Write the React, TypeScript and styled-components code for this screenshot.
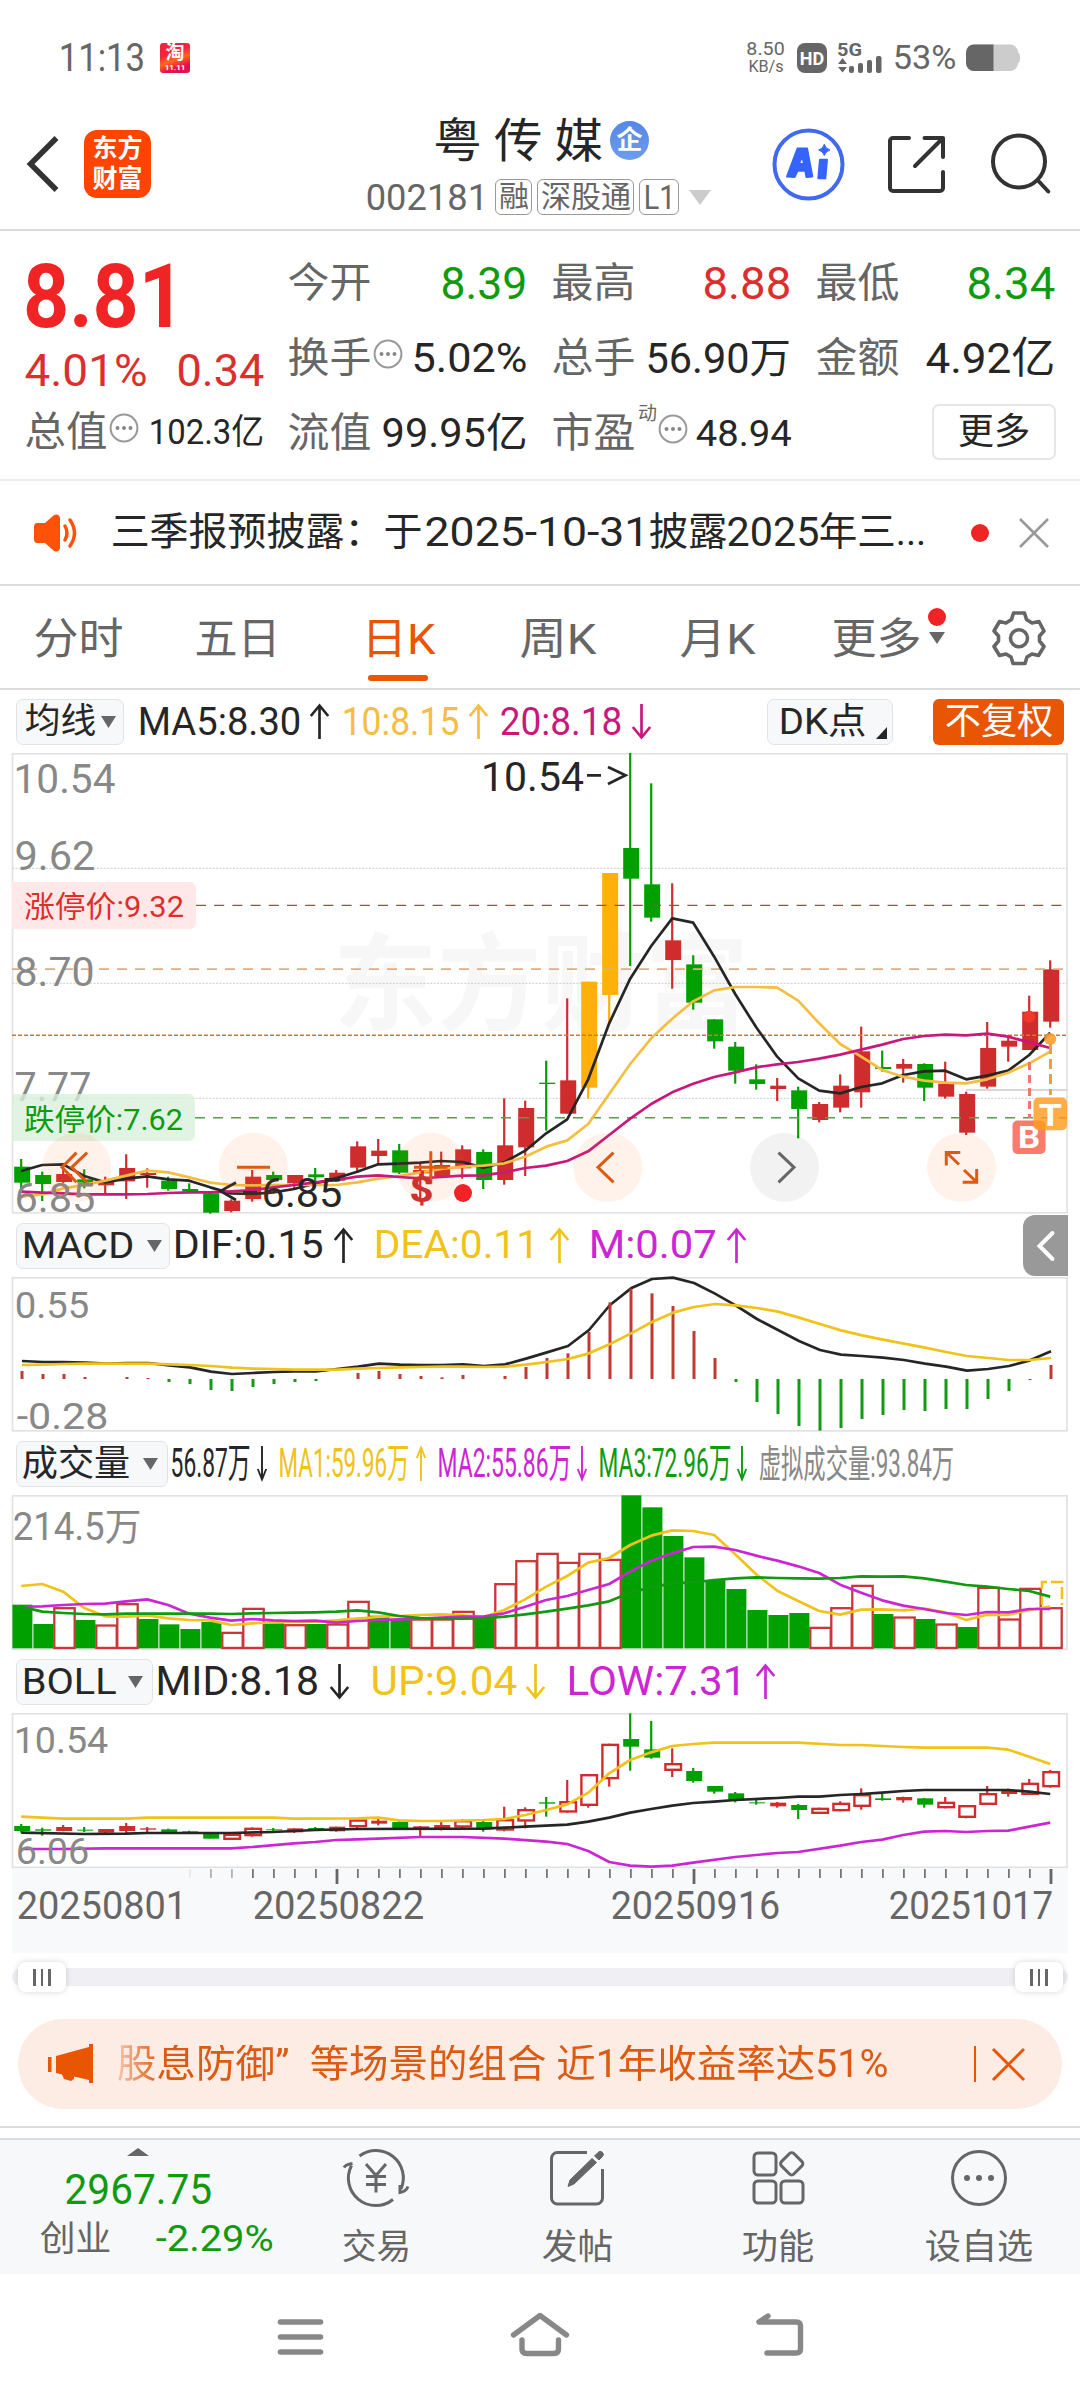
import React, { useLayoutEffect, useRef, useState } from "react";
import styled, { createGlobalStyle } from "styled-components";

const FONT = 'Roboto, "Noto Sans CJK SC", sans-serif';
const C = {
  red: "#cf2d2d",
  rise: "#dd2e2e",
  green: "#00a000",
  fall: "#109a10",
  orange: "#ffb00a",
  brand: "#e85503",
  ink: "#262626",
  grey: "#666",
  light: "#888",
  yellow: "#f0c21a",
  amber: "#f5bd42",
  magenta: "#c8187c",
  violet: "#cc26d4",
  line: "#dcdcdc",
};

const Global = createGlobalStyle`
  html, body { margin: 0; padding: 0; background: #fff; }
  * { box-sizing: border-box; }
  svg { display: block; flex: none; overflow: visible; }
`;

/* ---------- text that shrinks or stretches to its slot ---------- */

const Slot = styled.span<{ $w: number; $size: number; $ml?: number; $c?: string; $b?: number }>`
  display: block;
  flex: none;
  width: ${(p) => p.$w}px;
  height: ${(p) => p.$size}px;
  margin-left: ${(p) => p.$ml ?? 0}px;
  font: ${(p) => p.$b ?? 400} ${(p) => p.$size}px/1 ${FONT};
  color: ${(p) => p.$c ?? C.ink};
  white-space: pre;
`;
const Glyphs = styled.span`
  display: inline-block;
  transform-origin: 0 50%;
`;

type FitProps = { w: number; size: number; ml?: number; c?: string; b?: number; children: string };
function Fit({ w, size, ml, c, b, children }: FitProps) {
  const ref = useRef<HTMLSpanElement>(null);
  const [k, setK] = useState(1);
  const bearing = size * 0.035;
  useLayoutEffect(() => {
    const natural = ref.current?.offsetWidth ?? 0;
    if (natural) setK((w + bearing * 2) / natural);
  }, [w, bearing, children]);
  return (
    <Slot $w={w} $size={size} $ml={ml} $c={c} $b={b}>
      <Glyphs ref={ref} style={{ transform: `translateX(${-bearing}px) scaleX(${k})` }}>
        {children}
      </Glyphs>
    </Slot>
  );
}

/* ---------- page frame ---------- */

const Page = styled.main`
  width: 1080px;
  height: 2400px;
  overflow: hidden;
  display: flex;
  flex-direction: column;
  background: #fff;
  font-family: ${FONT};
`;

const StatusBar = styled.div`
  display: flex;
  align-items: center;
  justify-content: space-between;
  height: 98px;
  padding: 17px 60px 0 60px;
`;
const Cluster = styled.div<{ $gap?: number; $ml?: number }>`
  display: flex;
  align-items: center;
  gap: ${(p) => p.$gap ?? 0}px;
  margin-left: ${(p) => p.$ml ?? 0}px;
`;
const Speed = styled.div`
  display: flex;
  flex-direction: column;
  align-items: center;
  gap: 0;
`;
const PromoIcon = styled.div`
  width: 30px;
  height: 30px;
  border-radius: 3px;
  background: linear-gradient(160deg, #f5223c 0 35%, #ff6a1a 55%, #e3124e 76%);
  color: #fff;
  text-align: center;
  font: 700 19px/20px ${FONT};
`;
const PromoDate = styled.div`
  font: 700 8px/9px ${FONT};
`;
const HdBadge = styled.div`
  width: 30px;
  height: 30px;
  border-radius: 8px;
  background: #666;
  color: #fff;
  font: 700 18px/31px ${FONT};
  text-align: center;
`;

const Header = styled.header`
  display: flex;
  align-items: center;
  height: 133px;
  padding-left: 26px;
  border-bottom: 2px solid ${C.line};
`;
const Logo = styled.div`
  width: 67px;
  height: 68px;
  margin-left: 25px;
  padding-top: 4px;
  border-radius: 13px;
  background: #ff4400;
  color: #fff;
  font: 700 25px/30px ${FONT};
  text-align: center;
`;
const TitleColumn = styled.div`
  display: flex;
  flex-direction: column;
  gap: 17px;
  width: 346px;
  margin-left: 216px;
  padding-top: 4px;
`;
const TitleRow = styled.div`
  display: flex;
  align-items: center;
  height: 46px;
  padding: 2px 0 0 69px;
`;
const CorpBadge = styled.div`
  width: 39px;
  height: 39px;
  margin-left: 9px;
  border-radius: 50%;
  background: linear-gradient(#5587e4, #6d9df0);
  color: #fff;
  font: 700 26px/38px ${FONT};
  text-align: center;
`;
const CodeRow = styled.div`
  display: flex;
  align-items: center;
  height: 36px;
`;
const Tag = styled.div<{ $w: number; $ml: number }>`
  display: flex;
  align-items: center;
  justify-content: center;
  width: ${(p) => p.$w}px;
  height: 36px;
  margin-left: ${(p) => p.$ml}px;
  border: 1.5px solid #999;
  border-radius: 6px;
`;

/* ---------- quote ---------- */

const Quote = styled.section`
  display: flex;
  gap: 26px;
  height: 250px;
  padding: 15px 0 0 26px;
  border-bottom: 2px solid #ebebeb;
`;
const PriceColumn = styled.div`
  display: flex;
  flex-direction: column;
  width: 237px;
`;
const PriceLine = styled.div<{ $h: number }>`
  display: flex;
  align-items: center;
  justify-content: space-between;
  height: ${(p) => p.$h}px;
`;
const StatGrid = styled.div`
  display: grid;
  grid-template-columns: repeat(3, 237px);
  grid-auto-rows: 75px;
  column-gap: 27px;
`;
const Cell = styled.div`
  display: flex;
  align-items: center;
  justify-content: space-between;
`;
const DynamicMark = styled.span`
  align-self: flex-start;
  margin: -9px 0 0 4px;
  font: 400 19px/19px ${FONT};
  color: ${C.grey};
`;
const MoreButton = styled.div`
  display: flex;
  align-items: center;
  justify-content: center;
  width: 124px;
  height: 56px;
  margin: -4px -2px 0 auto;
  border: 2px solid #e6e6e6;
  border-radius: 7px;
`;

/* ---------- notice and tabs ---------- */

const Notice = styled.section`
  display: flex;
  align-items: center;
  height: 105px;
  padding-left: 33px;
  border-bottom: 2px solid ${C.line};
`;
const Dot = styled.i<{ $ml?: number }>`
  display: block;
  width: 18px;
  height: 18px;
  margin-left: ${(p) => p.$ml ?? 0}px;
  border-radius: 50%;
  background: #f02424;
`;
const Tabs = styled.nav`
  display: flex;
  align-items: center;
  height: 104px;
  padding: 5px 0 0 35px;
  border-bottom: 2px solid ${C.line};
`;
const ActiveTab = styled.div`
  position: relative;
  margin-left: 84px;
  &::after {
    content: "";
    position: absolute;
    left: 5px;
    top: 57px;
    width: 60px;
    height: 6px;
    border-radius: 3px;
    background: ${C.brand};
  }
`;
const MoreMark = styled.div`
  display: flex;
  flex-direction: column;
  align-items: center;
  gap: 6px;
  margin: -27px 0 0 8px;
`;

/* ---------- indicator rows ---------- */

const IndicatorRow = styled.div`
  display: flex;
  align-items: center;
  height: 63px;
  padding-left: 16px;
`;
const Picker = styled.div<{ $w: number; $ml?: number; $pad?: number }>`
  display: flex;
  align-items: center;
  flex: none;
  width: ${(p) => p.$w}px;
  height: 46px;
  margin-left: ${(p) => p.$ml ?? 0}px;
  padding-left: ${(p) => p.$pad ?? 6}px;
  border: 1.5px solid #e0e3e8;
  border-radius: 7px;
  background: #f6f8fa;
`;
const AdjustButton = styled.div`
  display: flex;
  align-items: center;
  justify-content: center;
  width: 131px;
  height: 46px;
  margin-left: 40px;
  border-radius: 6px;
  background: ${C.brand};
`;
const Corner = styled.i`
  align-self: flex-end;
  width: 0;
  height: 0;
  margin: 0 0 5px 11px;
  border-left: 11px solid transparent;
  border-bottom: 12px solid ${C.ink};
`;
const Drawer = styled.div`
  display: flex;
  align-items: center;
  justify-content: center;
  width: 45px;
  height: 61px;
  margin-left: auto;
  margin-right: 12px;
  border-radius: 12px 0 0 12px;
  background: #999;
`;

/* ---------- slider, banner, bottom ---------- */

const SliderRow = styled.div`
  display: flex;
  align-items: center;
  height: 48px;
  padding: 0 12px;
`;
const Track = styled.div`
  display: flex;
  align-items: center;
  justify-content: space-between;
  width: 1056px;
  height: 18px;
  padding: 0 5px 0 6px;
  border-radius: 9px;
  background: #f0f0f4;
`;
const Thumb = styled.div`
  display: flex;
  align-items: center;
  justify-content: center;
  gap: 5px;
  width: 48px;
  height: 30px;
  border-radius: 8px;
  background: #fff;
  box-shadow: 0 0 6px rgba(0, 0, 0, 0.16);
  & > i {
    width: 2.5px;
    height: 17px;
    background: #666;
  }
`;
const Banner = styled.section`
  display: flex;
  align-items: center;
  flex: none;
  width: 1044px;
  height: 90px;
  margin: 18px 0 0 18px;
  padding-left: 29px;
  border-radius: 45px;
  background: #fcece3;
`;
const Fade = styled.div`
  display: flex;
  margin-left: 17px;
  padding-left: 7px;
  mask-image: linear-gradient(90deg, rgba(0, 0, 0, 0.15), #000 50px);
`;
const Rule = styled.i<{ $ml: number }>`
  width: 1.5px;
  height: 36px;
  margin-left: ${(p) => p.$ml}px;
  background: ${C.brand};
`;
const Strip = styled.div`
  flex: none;
  height: 12px;
  margin-top: 17px;
  border-top: 2px solid ${C.line};
`;
const BottomBar = styled.nav`
  display: flex;
  flex: none;
  height: 136px;
  border-top: 2px solid ${C.line};
  background: #f6f8fa;
`;
const IndexBox = styled.div`
  display: flex;
  flex-direction: column;
  align-items: center;
  width: 276px;
  padding-top: 8px;
`;
const IndexLine = styled.div<{ $mt: number; $pl?: number }>`
  display: flex;
  align-items: center;
  align-self: flex-start;
  height: 40px;
  margin-top: ${(p) => p.$mt}px;
  padding-left: ${(p) => p.$pl ?? 0}px;
`;
const Action = styled.div`
  display: flex;
  flex-direction: column;
  align-items: center;
  gap: 23px;
  width: 201.3px;
  padding-top: 9px;
`;
const SystemNav = styled.nav`
  display: flex;
  align-items: center;
  justify-content: center;
  gap: 182px;
  height: 126px;
  padding-bottom: 6px;
`;

/* ---------- small glyphs ---------- */

const Caret = ({ w = 15, h = 12, ml = 0, c = "#666", up }: { w?: number; h?: number; ml?: number; c?: string; up?: boolean }) => (
  <svg width={w + ml} height={h} viewBox={`${-ml} 0 ${w + ml} ${h}`}>
    <path d={up ? `M0 ${h}H${w}L${w / 2} 0Z` : `M0 0H${w}L${w / 2} ${h}Z`} fill={c} />
  </svg>
);
const Trend = ({ ml, c, down, w = 19 }: { ml: number; c: string; down?: boolean; w?: number }) => (
  <svg width={w + ml} height={35} viewBox={`${-ml} 0 ${w + ml} 35`} fill="none" stroke={c} strokeWidth={w > 12 ? 2.7 : 1.9}>
    <path d={down ? `M${w / 2} 0V33M.8 23L${w / 2} 33.5L${w - 0.8} 23` : `M${w / 2} 2V35M.8 12L${w / 2} 1.5L${w - 0.8} 12`} />
  </svg>
);
const Info = ({ ml = 3 }: { ml?: number }) => (
  <svg width={30 + ml} height={38} viewBox={`${-ml} 0 ${30 + ml} 38`}>
    <circle cx="15" cy="14" r="13.4" fill="none" stroke="#999" strokeWidth="2" />
    <circle cx="8.500" cy="14" r="2" fill="#888" />
    <circle cx="15" cy="14" r="2" fill="#888" />
    <circle cx="21.500" cy="14" r="2" fill="#888" />
  </svg>
);
const Cross = ({ s, c, sw }: { s: number; c: string; sw: number }) => (
  <svg width={s} height={s} viewBox={`0 0 ${s} ${s}`} stroke={c} strokeWidth={sw}>
    <path d={`M1 1L${s - 1} ${s - 1}M${s - 1} 1L1 ${s - 1}`} />
  </svg>
);

/* ---------- chart data ---------- */

type Kind = "g" | "r" | "o" | "f";
type Bar = [Kind, number, number, number, number];

const candles: Bar[] = [
  ["g", 1257, 1280, 1328, 1355], ["g", 1295, 1305, 1332, 1383], ["r", 1275, 1302, 1326, 1330], ["g", 1288, 1318, 1328, 1345],
  ["r", 1310, 1325, 1336, 1362], ["r", 1243, 1284, 1324, 1377], ["r", 1285, 1299, 1305, 1343], ["g", 1310, 1322, 1347, 1352],
  ["g", 1330, 1347, 1354, 1358], ["g", 1355, 1360, 1418, 1421], ["r", 1378, 1382, 1413, 1417], ["r", 1290, 1310, 1377, 1385],
  ["g", 1295, 1305, 1320, 1325], ["r", 1305, 1305, 1330, 1345], ["g", 1284, 1303, 1312, 1325], ["r", 1290, 1298, 1322, 1325],
  ["r", 1204, 1219, 1283, 1298], ["r", 1197, 1232, 1248, 1272], ["g", 1212, 1231, 1298, 1302], ["r", 1272, 1290, 1300, 1385],
  ["r", 1235, 1275, 1308, 1310], ["r", 1216, 1228, 1285, 1316], ["g", 1228, 1236, 1320, 1347], ["r", 1075, 1216, 1320, 1334],
  ["r", 1082, 1104, 1222, 1308], ["g", 962, 1028, 1032, 1172], ["r", 775, 1021, 1121, 1121], ["o", 725, 725, 1043, 1076],
  ["o", 399, 399, 765, 850], ["g", 39, 324, 416, 678], ["g", 130, 433, 533, 545], ["r", 430, 601, 660, 746],
  ["g", 646, 673, 788, 809], ["g", 838, 838, 904, 926], ["g", 906, 920, 992, 1031], ["g", 973, 1018, 1032, 1049],
  ["r", 1014, 1037, 1047, 1083], ["g", 1040, 1051, 1107, 1195], ["r", 1086, 1092, 1140, 1147], ["r", 1003, 1037, 1103, 1117],
  ["r", 860, 934, 1057, 1103], ["g", 932, 981, 987, 995], ["r", 957, 972, 986, 1028], ["g", 970, 972, 1043, 1083],
  ["r", 965, 1031, 1070, 1076], ["r", 1055, 1062, 1178, 1185], ["r", 846, 924, 1040, 1046], ["r", 892, 902, 920, 965],
  ["r", 767, 815, 930, 930], ["r", 661, 688, 845, 863],
];
const ma5 = [1293, 1275, 1273, 1308, 1327, 1316, 1309, 1318, 1322, 1342, 1360, 1362, 1357, 1347, 1330, 1315, 1295, 1273, 1271, 1268, 1263, 1266, 1283, 1267, 1232, 1180, 1138, 1018, 850, 716, 618, 535, 548, 650, 762, 862, 950, 1015, 1052, 1060, 1041, 1030, 1005, 994, 992, 1018, 1007, 992, 945, 878];
const ma10 = [1370, 1363, 1345, 1335, 1322, 1307, 1292, 1297, 1312, 1328, 1335, 1336, 1335, 1335, 1335, 1335, 1327, 1316, 1308, 1297, 1287, 1280, 1277, 1270, 1250, 1220, 1201, 1152, 1062, 972, 895, 836, 784, 751, 741, 741, 743, 782, 850, 912, 950, 990, 1010, 1022, 1028, 1030, 1018, 998, 970, 935];
const ma20 = [1355, 1358, 1360, 1363, 1363, 1363, 1362, 1359, 1357, 1357, 1354, 1350, 1342, 1335, 1327, 1320, 1310, 1306, 1311, 1315, 1311, 1307, 1306, 1297, 1284, 1277, 1263, 1234, 1185, 1136, 1092, 1057, 1031, 1011, 997, 982, 973, 966, 956, 944, 929, 914, 897, 888, 884, 886, 881, 890, 907, 924];

const macdBars = [483, 492, 492, 501, 507, 501, 504, 516, 522, 540, 543, 531, 522, 516, 513, 507, 489, 483, 492, 498, 502, 495, 507, 498, 471, 444, 430, 366, 277, 236, 250, 288, 363, 444, 516, 576, 612, 648, 662, 654, 627, 615, 600, 603, 597, 597, 567, 543, 510, 465];
const dif = [453, 456, 456, 458, 461, 459, 459, 466, 472, 485, 492, 489, 486, 484, 484, 477, 470, 461, 464, 465, 465, 463, 468, 463, 446, 427, 408, 360, 285, 235, 207, 203, 219, 251, 287, 327, 360, 393, 420, 434, 438, 443, 450, 461, 470, 482, 477, 468, 451, 424];
const dea = [465, 464, 462, 461, 461, 461, 461, 463, 465, 468, 473, 476, 477, 479, 479, 479, 476, 474, 472, 471, 470, 470, 471, 470, 464, 456, 447, 430, 402, 370, 336, 308, 291, 282, 286, 294, 305, 323, 342, 361, 376, 389, 401, 413, 426, 438, 444, 450, 450, 444];

const volKinds = "ggrgrrggggrrgrgrrggrrrgrrrrrrgggggggggrrrgrgrgrrrr";
const volumes = [344, 402, 351, 390, 403, 339, 387, 403, 417, 396, 425, 353, 400, 402, 402, 400, 332, 377, 388, 385, 385, 362, 385, 279, 210, 188, 215, 188, 206, 16, 52, 138, 202, 270, 297, 360, 375, 369, 410, 351, 284, 372, 379, 387, 400, 411, 290, 385, 293, 351];
const vma1 = [288, 282, 305, 354, 379, 380, 376, 385, 390, 391, 405, 400, 397, 395, 395, 391, 386, 381, 378, 375, 373, 376, 382, 360, 328, 290, 258, 218, 204, 165, 137, 121, 123, 135, 193, 253, 302, 333, 363, 374, 359, 358, 361, 356, 367, 390, 374, 375, 360, 350];
const vma2 = [350, 349, 345, 342, 341, 334, 328, 345, 371, 383, 392, 387, 391, 393, 392, 398, 393, 390, 388, 386, 383, 380, 380, 370, 350, 330, 318, 300, 282, 245, 212, 190, 171, 170, 180, 197, 212, 229, 249, 284, 308, 331, 347, 357, 369, 375, 366, 367, 357, 357];
const vma3 = [350, 365, 369, 372, 373, 371, 371, 371, 371, 371, 372, 370, 369, 368, 367, 365, 361, 367, 378, 384, 386, 386, 385, 380, 373, 365, 356, 346, 334, 308, 292, 280, 277, 270, 265, 262, 264, 265, 266, 264, 259, 260, 259, 265, 275, 285, 290, 297, 303, 320];

const bollCandles: Bar[] = [
  ["g", 1002, 1008, 1023, 1028], ["g", 1013, 1018, 1022, 1037], ["f", 1005, 1011, 1023, 1024], ["g", 1011, 1019, 1022, 1026],
  ["f", 1017, 1017, 1028, 1031], ["f", 999, 1008, 1023, 1035], ["f", 1011, 1015, 1019, 1026], ["g", 1016, 1018, 1027, 1028],
  ["g", 1022, 1024, 1032, 1032], ["g", 1030, 1030, 1046, 1046], ["r", 1031, 1031, 1050, 1050], ["r", 1012, 1013, 1039, 1040],
  ["g", 1014, 1018, 1021, 1026], ["f", 1015, 1015, 1027, 1029], ["g", 1011, 1014, 1018, 1022], ["f", 1010, 1010, 1024, 1025],
  ["r", 988, 988, 1012, 1015], ["f", 986, 992, 1001, 1006], ["g", 990, 996, 1014, 1016], ["f", 1008, 1009, 1018, 1038],
  ["f", 995, 1005, 1020, 1021], ["r", 988, 990, 1013, 1018], ["g", 993, 996, 1018, 1025], ["r", 950, 987, 1022, 1024],
  ["r", 952, 957, 995, 1015], ["g", 921, 937, 941, 980], ["r", 870, 933, 968, 968], ["r", 852, 852, 948, 953],
  ["r", 761, 761, 868, 890], ["g", 670, 747, 770, 842], ["g", 693, 778, 803, 806], ["r", 775, 819, 843, 861],
  ["g", 834, 843, 873, 878], ["g", 888, 888, 905, 911], ["g", 906, 910, 929, 937], ["g", 925, 937, 940, 944],
  ["f", 936, 938, 949, 953], ["g", 942, 945, 960, 987], ["r", 953, 953, 972, 972], ["r", 934, 938, 964, 964],
  ["r", 895, 912, 951, 959], ["g", 911, 925, 930, 932], ["f", 920, 921, 931, 938], ["g", 924, 925, 944, 953],
  ["r", 921, 935, 955, 955], ["r", 945, 945, 984, 985], ["r", 888, 909, 945, 945], ["f", 896, 902, 912, 920],
  ["r", 867, 878, 915, 915], ["r", 840, 843, 892, 893],
];
type Knots = [number, number][];
const bollUp: Knots = [[0, 980], [1, 983], [2, 986], [5, 986], [6, 983], [12, 983], [13, 986], [16, 985], [17, 983], [18, 991], [19, 993], [20, 993], [22, 990], [23, 987], [24, 975], [25, 960], [26, 943], [27, 908], [28, 850], [29, 810], [30, 787], [31, 768], [32, 762], [33, 758], [37, 758], [39, 765], [40, 765], [42, 771], [43, 773], [46, 773], [47, 779], [48, 800], [49, 822]];
const bollMid: Knots = [[0, 1028], [3, 1032], [5, 1031], [6, 1029], [10, 1029], [12, 1026], [14, 1020], [16, 1017], [22, 1016], [24, 1010], [26, 1004], [27, 995], [28, 983], [29, 968], [30, 957], [31, 947], [32, 939], [33, 935], [34, 930], [36, 924], [37, 920], [38, 920], [39, 915], [40, 912], [41, 908], [42, 903], [43, 900], [47, 900], [48, 905], [49, 912]];
const bollLow: Knots = [[0, 1077], [2, 1077], [4, 1075], [10, 1075], [11, 1071], [13, 1060], [14, 1056], [15, 1050], [16, 1048], [17, 1046], [19, 1041], [21, 1041], [23, 1046], [25, 1055], [26, 1062], [27, 1083], [28, 1116], [29, 1127], [30, 1130], [31, 1127], [32, 1118], [34, 1101], [36, 1089], [37, 1086], [39, 1067], [40, 1056], [41, 1049], [42, 1035], [43, 1025], [44, 1023], [45, 1026], [46, 1023], [47, 1022], [48, 1010], [49, 998]];

/* ---------- chart drawing ---------- */

const cx = (i: number) => 21.2 + 21 * i;
const scale = (base: number) => (v: number) => base + v / 3;

const Line = ({ knots, y, c, w = 2.7, dx = 0 }: { knots: Knots; y: (v: number) => number; c: string; w?: number; dx?: number }) => (
  <polyline points={knots.map(([i, v]) => `${cx(i) + dx},${y(v)}`).join(" ")} fill="none" stroke={c} strokeWidth={w} strokeLinejoin="round" />
);
const indexed = (a: number[]): Knots => a.map((v, i) => [i, v]);

const Candles = ({ data, y, hollow }: { data: Bar[]; y: (v: number) => number; hollow?: boolean }) => (
  <g>
    {data.map(([k, h, t, b, l], i) => {
      const c = k === "g" ? C.green : k === "o" ? C.orange : C.red;
      const x = cx(i);
      const open = hollow && k === "r";
      return (
        <g key={i} fill={c} stroke="none">
          <rect x={x - 1.1} y={y(h)} width={2.2} height={y(l) - y(h)} />
          {open ? (
            <rect x={x - 6.8} y={y(t) + 1.2} width={15.6} height={Math.max(1, y(b) - y(t) - 2.4)} fill="#fff" stroke={C.red} strokeWidth={2.4} />
          ) : (
            <rect x={x - 7} y={y(t)} width={16} height={y(b) - y(t)} />
          )}
        </g>
      );
    })}
  </g>
);

type LabelProps = { x: number; y: number; w: number; size: number; c?: string; b?: number; children: string };
const Label = ({ x, y, w, size, c = C.light, b = 400, children }: LabelProps) => (
  <text x={x - size * 0.035} y={y} fontFamily={FONT} fontSize={size} fontWeight={b} fill={c} textLength={w + size * 0.07} lengthAdjust="spacingAndGlyphs">
    {children}
  </text>
);

const Panel = ({ top, height, frame, children }: { top: number; height: number; frame: number; children: React.ReactNode }) => (
  <svg width={1080} height={height} viewBox={`0 ${top} 1080 ${height}`}>
    <rect x={12.5} y={top + 0.8} width={1054.5} height={frame} fill="none" stroke="#e2e2e2" strokeWidth={1.7} />
    {children}
  </svg>
);

function PriceChart() {
  const y = scale(740);
  const buttonY = 1167.3;
  return (
    <Panel top={753} height={461} frame={459}>
      <Label x={337} y={1022} w={408} size={106} c="#f7f7f7" b={700}>东方财富</Label>
      {[868.3, 983.3, 1098.3].map((g) => (
        <line key={g} x1={12} x2={1067} y1={g} y2={g} stroke="#ccc" strokeWidth={1} strokeDasharray="2 1.4" />
      ))}
      <line x1={966} x2={1067} y1={1090} y2={1090} stroke="#ccc" strokeWidth={1.6} />
      <Candles data={candles} y={y} />
      <line x1={196} x2={1067} y1={905.3} y2={905.3} stroke="#b9403d" strokeWidth={1.3} strokeDasharray="10 8.2" />
      <line x1={12} x2={1067} y1={969.2} y2={969.2} stroke="#dfae7c" strokeWidth={1.7} strokeDasharray="10 8" strokeDashoffset={3} />
      <line x1={12} x2={1067} y1={1035.3} y2={1035.3} stroke="#cf762f" strokeWidth={1.6} strokeDasharray="4 2" />
      <line x1={195} x2={1067} y1={1117.7} y2={1117.7} stroke="#4fa04f" strokeWidth={1.5} strokeDasharray="10 8" />
      <Line knots={indexed(ma5)} y={y} c={C.ink} />
      <Line knots={indexed(ma10)} y={y} c={C.amber} />
      <Line knots={indexed(ma20)} y={y} c={C.magenta} />
      <Label x={15} y={792.5} w={99} size={41}>10.54</Label>
      <Label x={16} y={869.5} w={78} size={41}>9.62</Label>
      <Label x={16} y={986} w={77} size={41}>8.70</Label>
      <Label x={16} y={1101} w={74} size={41}>7.77</Label>
      <Label x={16} y={1212} w={78} size={41}>6.85</Label>
      <path d="M12 882H190a6 6 0 0 1 6 6V923a6 6 0 0 1 -6 6H12Z" fill="#ffe8e7" />
      <Label x={25} y={917} w={158} size={30} c={C.rise}>涨停价:9.32</Label>
      <path d="M12 1094H189a6 6 0 0 1 6 6V1135a6 6 0 0 1 -6 6H12Z" fill="#d9f0da" fillOpacity={0.78} />
      <Label x={25} y={1129.5} w={157} size={30} c={C.fall}>跌停价:7.62</Label>

      <Label x={482.5} y={790.7} w={100} size={41} c={C.ink}>10.54</Label>
      <path d="M587 775.3H601M608 767L625.5 775.3L608 784" fill="none" stroke={C.ink} strokeWidth={2.7} />
      <Label x={263} y={1206.5} w={78} size={40} c={C.ink}>6.85</Label>
      <path d="M236 1182.5L220.5 1191L236 1200M243 1192.3H257" fill="none" stroke={C.ink} strokeWidth={2.7} />

      {[76.8, 253.4, 430.8, 607.8, 961.5].map((x) => (
        <circle key={x} cx={x} cy={buttonY} r={34.5} fill="#ff6a1a" fillOpacity={0.09} />
      ))}
      <circle cx={784.5} cy={buttonY} r={34.5} fill="#000" fillOpacity={0.05} />
      <g fill="none" stroke="#dc5a12" strokeWidth={3}>
        <path d="M76.5 1152.6L62 1167.3L76.5 1182.3M87.2 1152.6L71.7 1167.3L87.2 1182.3" />
        <path d="M237 1167.3H270M414 1167.3H447.5M430.8 1151.3V1183.3" />
        <path d="M613.5 1152.6L598 1167.3L613.5 1182.3" />
        <path d="M959 1164.5L946.5 1152.5M946.3 1165.5V1152.5H960.3M964 1170L976.5 1182M976.7 1169V1182.3H962.7" />
      </g>
      <path d="M778.5 1152.6L794 1167.3L778.5 1182.3" fill="none" stroke={C.grey} strokeWidth={3} />
      <Label x={410.5} y={1201.5} w={22} size={36} c="#cf3030" b={700}>$</Label>
      <circle cx={463} cy={1193} r={9} fill="#f02424" />

      <circle cx={1029.2} cy={1016.7} r={6} fill="#f0392a" />
      <circle cx={1050.2} cy={1039} r={6} fill="#ff9d2e" fillOpacity={0.9} />
      <path d="M1029.5 1062V1118" stroke="#f2766b" strokeWidth={3} strokeDasharray="8 5" />
      <path d="M1050.5 1044V1095" stroke="#eba23c" strokeWidth={3} strokeDasharray="10 5" />
      <rect x={1012.5} y={1120.5} width={33} height={33.5} rx={5} fill="#fa7b6c" />
      <Label x={1019} y={1148} w={20} size={31} c="#fff" b={700}>B</Label>
      <rect x={1033.5} y={1097.5} width={33.5} height={32.7} rx={5} fill="#ff9c1e" fillOpacity={0.82} />
      <Label x={1040} y={1126} w={21} size={32} c="#fff" b={700}>T</Label>
    </Panel>
  );
}

function MacdChart() {
  const y = scale(1210);
  return (
    <Panel top={1277} height={155} frame={153}>
      <Label x={16} y={1317.5} w={72} size={37}>0.55</Label>
      <Label x={18} y={1428.5} w={89} size={37}>-0.28</Label>
      <Line knots={indexed(dif)} y={y} c={C.ink} dx={0.8} />
      {macdBars.map((v, i) =>
        v === 507 ? null : (
          <rect key={i} x={cx(i) - 0.7} width={3} y={y(Math.min(v, 507))} height={Math.abs(v - 507) / 3} fill={v < 507 ? "#c03a34" : "#159a15"} />
        )
      )}
      <Line knots={indexed(dea)} y={y} c={C.yellow} dx={0.8} />
    </Panel>
  );
}

function VolumeChart() {
  const y = scale(1490);
  const floor = y(475);
  return (
    <Panel top={1495} height={155} frame={153.5}>
      <Label x={14} y={1540} w={126} size={38}>214.5万</Label>
      {volumes.map((v, i) => {
        const left = 12.4 + 21 * i;
        return volKinds[i] === "g" ? (
          <rect key={i} x={left} y={y(v)} width={20} height={floor - y(v)} fill={C.green} />
        ) : (
          <rect key={i} x={left - 0.1} y={y(v) + 1.2} width={20.4} height={floor - y(v) - 1.6} fill="#fff" stroke="#c8383a" strokeWidth={2.3} />
        );
      })}
      <path d="M1042 1605V1582H1062V1605" fill="none" stroke={C.yellow} strokeWidth={2.6} strokeDasharray="12 4" />
      <Line knots={indexed(vma1)} y={y} c={C.yellow} />
      <Line knots={indexed(vma2)} y={y} c={C.violet} />
      <Line knots={indexed(vma3)} y={y} c={C.fall} />
    </Panel>
  );
}

function BollChart() {
  const y = scale(1490);
  return (
    <Panel top={1713} height={155} frame={153.5}>
      <Label x={15} y={1753.3} w={92} size={37}>10.54</Label>
      <Candles data={bollCandles} y={y} hollow />
      <Line knots={bollUp} y={y} c={C.yellow} />
      <Line knots={bollMid} y={y} c={C.ink} />
      <Line knots={bollLow} y={y} c={C.violet} />
      <Label x={17} y={1864} w={71} size={37}>6.06</Label>
    </Panel>
  );
}

const AxisBox = styled.div`
  flex: none;
  width: 1056px;
  height: 85px;
  margin-left: 12px;
  background: #f8f9fb;
`;
const DateRow = styled.div`
  display: flex;
  padding: 4px 0 0 6px;
`;
function DateAxis() {
  return (
    <AxisBox>
      <svg width={1056} height={15} viewBox="12 1868 1056 15">
        {Array.from({ length: 42 }, (_, n) => n + 8).map((i) => {
          const major = i === 15 || i === 32 || i === 49;
          return <rect key={i} x={21.9 + 21 * i - (major ? 1.3 : 0.8)} y={1869} width={major ? 2.8 : 1.6} height={major ? 15 : 9} fill={i < 9 ? "#e6e6e6" : i < 11 ? "#aaa" : "#666"} />;
        })}
      </svg>
      <DateRow>
        <Fit w={168} size={38} c={C.grey}>20250801</Fit>
        <Fit w={169} size={38} ml={68} c={C.grey}>20250822</Fit>
        <Fit w={167} size={38} ml={189} c={C.grey}>20250916</Fit>
        <Fit w={162} size={38} ml={111} c={C.grey}>20251017</Fit>
      </DateRow>
    </AxisBox>
  );
}

/* ---------- icons of the bottom bar ---------- */

const TradeIcon = () => (
  <svg width="66" height="58" viewBox="0 0 66 58" fill="none" stroke={C.grey} strokeWidth="3">
    <path d="M16.500 7A27.400 27.400 0 0 1 58 40M50 50.500A27.400 27.400 0 0 1 8.500 16.500" />
    <path d="M1 18.500Q2.500 15.500 9.500 14.500M65 37.500Q63 42.500 57 43.500V36" />
    <path d="M23 15L33 26.500L43 15M33 26.500V43.500M23 27.500H43M23 35.500H43" />
  </svg>
);
const PostIcon = () => (
  <svg width="56" height="58" viewBox="0 0 56 58" fill="none" stroke={C.grey} strokeWidth="3">
    <path d="M38 3.500H8.500A6 6 0 0 0 2.500 9.500V49A6 6 0 0 0 8.500 55H47.500A6 6 0 0 0 53.500 49V20" />
    <path d="M19 37.500L21 31L43 9.500L47.500 13.500L25 35Z" fill={C.grey} strokeWidth="1" />
    <path d="M45.500 7L49 3.500A3 3 0 0 1 53.500 7.500L50 11Z" fill={C.grey} strokeWidth="1" />
  </svg>
);
const FeatureIcon = () => (
  <svg width="52" height="58" viewBox="0 0 52 58" fill="none" stroke={C.grey} strokeWidth="3">
    <rect x="2" y="4" width="22" height="22" rx="4" />
    <rect x="2" y="32" width="22" height="22" rx="4" />
    <rect x="29" y="32" width="22" height="22" rx="4" />
    <rect x="31" y="6" width="17.500" height="17.500" rx="3" transform="rotate(45 39.700 14.700)" />
  </svg>
);
const EllipsisIcon = () => (
  <svg width="58" height="58" viewBox="0 0 58 58">
    <circle cx="29" cy="29" r="26.500" fill="none" stroke={C.grey} strokeWidth="3" />
    <circle cx="17" cy="29" r="3" fill={C.grey} />
    <circle cx="29" cy="29" r="3" fill={C.grey} />
    <circle cx="41" cy="29" r="3" fill={C.grey} />
  </svg>
);

/* ---------- page ---------- */

export default function App() {
  return (
    <Page>
      <Global />
      <StatusBar>
        <Cluster $gap={16}>
          <Fit w={84} size={38} c={C.grey}>11:13</Fit>
          <PromoIcon>
            淘
            <PromoDate>11.11</PromoDate>
          </PromoIcon>
        </Cluster>
        <Cluster>
          <Speed>
            <Fit w={37} size={18} c={C.grey}>8.50</Fit>
            <Fit w={34} size={17} c={C.grey}>KB/s</Fit>
          </Speed>
          <Cluster $ml={13}>
            <HdBadge>HD</HdBadge>
          </Cluster>
          <svg width="56" height="31" viewBox="-11 0 56 31" fill="#666">
            <text x="-1" y="14" fontFamily={FONT} fontSize="19" fontWeight="700" textLength="25" lengthAdjust="spacingAndGlyphs">5G</text>
            <path d="M0 22L4.500 16L9 22ZM0 25L4.500 30.500L9 25Z" />
            <rect x="11" y="24" width="5" height="7" rx="2" />
            <rect x="20" y="21" width="5" height="10" rx="2" />
            <rect x="29" y="18" width="5" height="13" rx="2" />
            <rect x="38" y="14" width="5.500" height="17" rx="2" />
          </svg>
          <Fit w={61} size={33} ml={11} c={C.grey}>53%</Fit>
          <svg width="65" height="28" viewBox="-11 0 65 28">
            <path d="M8 .5H44a8 8 0 0 1 8 8Q54 9 54 14T52 19a8 8 0 0 1 -8 8H8a8 8 0 0 1 -8 -8V8.500a8 8 0 0 1 8 -8Z" fill="#ccc" />
            <path d="M8 .5H27.500V27H8a8 8 0 0 1 -8 -8V8.500a8 8 0 0 1 8 -8Z" fill="#666" />
          </svg>
        </Cluster>
      </StatusBar>

      <Header>
        <svg width="33" height="56" viewBox="0 0 33 56" fill="none" stroke="#333" strokeWidth="5.500">
          <path d="M30.500 2L4.500 28L30.500 54" />
        </svg>
        <Logo>
          东方
          <br />
          财富
        </Logo>
        <TitleColumn>
          <TitleRow>
            <Fit w={166} size={47} ml={-1}>粤 传 媒</Fit>
            <CorpBadge>企</CorpBadge>
          </TitleRow>
          <CodeRow>
            <Fit w={120} size={37} c={C.grey}>002181</Fit>
            <Tag $w={37} $ml={8}><Fit w={28} size={29} c={C.grey}>融</Fit></Tag>
            <Tag $w={97} $ml={5}><Fit w={88} size={30} c={C.grey}>深股通</Fit></Tag>
            <Tag $w={40} $ml={5}><Fit w={29} size={33} c={C.grey}>L1</Fit></Tag>
            <Caret w={22} h={15} ml={10} c="#ccc" />
          </CodeRow>
        </TitleColumn>
        <svg width="340" height="76" viewBox="713 125 340 76" fill="none" stroke="#333" strokeWidth="4" strokeLinecap="round" strokeLinejoin="round">
          <circle cx="808.500" cy="163.500" r="34" stroke="#4169f0" />
          <path d="M797.500 147.500H807L812.300 175.500L806.500 176L805.300 169.800H797.500L794.500 176L787 175.500Z M802.300 154.500L799 163H804Z" fill="#3464fb" fillRule="evenodd" stroke="#3464fb" strokeWidth="2" />
          <path d="M820 158.700H827L825.300 177.300H818.300Z" fill="#3464fb" stroke="#3464fb" strokeWidth="2" />
          <path d="M824.300 143.500Q825.500 147.800 830 149Q825.500 150.200 824.300 154.500Q823.100 150.200 818.600 149Q823.100 147.800 824.300 143.500Z" fill="#3464fb" stroke="#3464fb" strokeWidth="1" />
          <path d="M909 137H893a3 3 0 0 0 -3 3V187a3 3 0 0 0 3 3H940a3 3 0 0 0 3 -3V171M915 165L942 138M924.500 137H943V156" />
          <circle cx="1019" cy="160.500" r="26" />
          <path d="M1038 179.500L1048.300 190.500" />
        </svg>
      </Header>

      <Quote>
        <PriceColumn>
          <PriceLine $h={101}><Fit w={156} size={89} c="#f02424" b={700}>8.81</Fit></PriceLine>
          <PriceLine $h={48}>
            <Fit w={120} size={44} c={C.rise}>4.01%</Fit>
            <Fit w={85} size={44} c={C.rise}>0.34</Fit>
          </PriceLine>
          <PriceLine $h={75}>
            <Cluster><Fit w={80} size={41} c={C.grey}>总值</Fit><Info /></Cluster>
            <Fit w={113} size={35}>102.3亿</Fit>
          </PriceLine>
        </PriceColumn>
        <StatGrid>
          <Cell><Fit w={81} size={41} c={C.grey}>今开</Fit><Fit w={84} size={45} c={C.fall}>8.39</Fit></Cell>
          <Cell><Fit w={81} size={41} c={C.grey}>最高</Fit><Fit w={86} size={45} c={C.rise}>8.88</Fit></Cell>
          <Cell><Fit w={81} size={41} c={C.grey}>最低</Fit><Fit w={86} size={45} c={C.fall}>8.34</Fit></Cell>
          <Cell>
            <Cluster><Fit w={81} size={41} c={C.grey}>换手</Fit><Info /></Cluster>
            <Fit w={113} size={41}>5.02%</Fit>
          </Cell>
          <Cell><Fit w={81} size={41} c={C.grey}>总手</Fit><Fit w={143} size={42}>56.90万</Fit></Cell>
          <Cell><Fit w={81} size={41} c={C.grey}>金额</Fit><Fit w={127} size={43}>4.92亿</Fit></Cell>
          <Cell><Fit w={81} size={41} c={C.grey}>流值</Fit><Fit w={143} size={41}>99.95亿</Fit></Cell>
          <Cell>
            <Cluster><Fit w={81} size={41} c={C.grey}>市盈</Fit><DynamicMark>动</DynamicMark><Info ml={1} /></Cluster>
            <Fit w={93} size={36}>48.94</Fit>
          </Cell>
          <Cell><MoreButton><Fit w={70} size={36}>更多</Fit></MoreButton></Cell>
        </StatGrid>
      </Quote>

      <Notice>
        <svg width="45" height="38" viewBox="0 0 45 38">
          <path d="M4 9H12L21 1Q26 -1 27 4V34Q26 39 21 37L12 29H4Q1 29 1 25V13Q1 9 4 9Z" fill="#ff5208" />
          <path d="M32 12Q36 19 32 26M37 6Q46 19 37 32" fill="none" stroke="#ff5208" strokeWidth="3.500" strokeLinecap="round" />
        </svg>
        <Fit w={309} size={39} ml={34}>三季报预披露：于</Fit>
        <Fit w={222} size={40} ml={5}>2025-10-31</Fit>
        <Fit w={76} size={39} ml={2}>披露</Fit>
        <Fit w={90} size={40} ml={2}>2025</Fit>
        <Fit w={105} size={39} ml={2}>年三...</Fit>
        <Dot $ml={46} />
        <Cluster $ml={30}><Cross s={30} c="#999" sw={2.6} /></Cluster>
      </Notice>

      <Tabs>
        <Fit w={87} size={43} c={C.grey}>分时</Fit>
        <Fit w={83} size={43} ml={74} c={C.grey}>五日</Fit>
        <ActiveTab><Fit w={71} size={43} c={C.brand}>日K</Fit></ActiveTab>
        <Fit w={74} size={43} ml={87} c={C.grey}>周K</Fit>
        <Fit w={73} size={43} ml={86} c={C.grey}>月K</Fit>
        <Fit w={87} size={43} ml={79} c={C.grey}>更多</Fit>
        <MoreMark>
          <Dot />
          <Caret w={16} h={12} />
        </MoreMark>
        <Cluster $ml={45}>
          <svg width="56" height="60" viewBox="0 0 56 60" fill="none" stroke={C.grey} strokeWidth="3.600">
            <path d="M22.500 3H33.500L35.500 9.500L41 13L48 11.500L53 21L48.500 26V31L53 36.500L47.500 45.500L41 44L36 47L34 53.500H22L20 47L15 44L8.500 45.500L3 36.500L7.500 31V26L3 21L8.500 11.500L15 13L20.500 9.500Z" strokeLinejoin="round" />
            <circle cx="28" cy="28.300" r="8.500" />
          </svg>
        </Cluster>
      </Tabs>

      <IndicatorRow>
        <Picker $w={108} $pad={9}><Fit w={69} size={35}>均线</Fit><Caret ml={6} /></Picker>
        <Fit w={161} size={38} ml={15}>MA5:8.30</Fit>
        <Trend ml={10} c={C.ink} />
        <Fit w={115} size={38} ml={14} c={C.amber}>10:8.15</Fit>
        <Trend ml={11} c={C.amber} />
        <Fit w={120} size={38} ml={13} c={C.magenta}>20:8.18</Fit>
        <Trend ml={11} c={C.magenta} down />
        <Picker $w={126} $ml={116} $pad={12}><Fit w={85} size={36}>DK点</Fit><Corner /></Picker>
        <AdjustButton><Fit w={106} size={36} c="#fff">不复权</Fit></AdjustButton>
      </IndicatorRow>
      <PriceChart />

      <IndicatorRow>
        <Picker $w={154}><Fit w={110} size={37}>MACD</Fit><Caret ml={14} /></Picker>
        <Fit w={148} size={39} ml={4}>DIF:0.15</Fit>
        <Trend ml={12} c={C.ink} />
        <Fit w={163} size={39} ml={22} c={C.yellow}>DEA:0.11</Fit>
        <Trend ml={12} c={C.yellow} />
        <Fit w={126} size={39} ml={21} c={C.violet}>M:0.07</Fit>
        <Trend ml={11} c={C.violet} />
        <Drawer>
          <svg width="18" height="32" viewBox="0 0 18 32" fill="none" stroke="#fff" strokeWidth="4" strokeLinecap="round">
            <path d="M15.500 3L2.500 16L15.500 29" />
          </svg>
        </Drawer>
      </IndicatorRow>
      <MacdChart />

      <IndicatorRow>
        <Picker $w={152}><Fit w={106} size={36}>成交量</Fit><Caret ml={14} /></Picker>
        <Fit w={77} size={40} ml={4}>56.87万</Fit>
        <Trend ml={8} w={10} c={C.ink} down />
        <Fit w={128} size={40} ml={13} c={C.yellow}>MA1:59.96万</Fit>
        <Trend ml={8} w={10} c={C.yellow} />
        <Fit w={131} size={40} ml={13} c={C.violet}>MA2:55.86万</Fit>
        <Trend ml={7} w={10} c={C.violet} down />
        <Fit w={130} size={40} ml={13} c={C.fall}>MA3:72.96万</Fit>
        <Trend ml={7} w={10} c={C.fall} down />
        <Fit w={193} size={38} ml={13} c={C.light}>虚拟成交量:93.84万</Fit>
      </IndicatorRow>
      <VolumeChart />

      <IndicatorRow>
        <Picker $w={137}><Fit w={92} size={37}>BOLL</Fit><Caret ml={13} /></Picker>
        <Fit w={161} size={40} ml={4}>MID:8.18</Fit>
        <Trend ml={12} c={C.ink} down />
        <Fit w={144} size={40} ml={23} c={C.yellow}>UP:9.04</Fit>
        <Trend ml={10} c={C.yellow} down />
        <Fit w={177} size={40} ml={23} c={C.violet}>LOW:7.31</Fit>
        <Trend ml={11} c={C.violet} />
      </IndicatorRow>
      <BollChart />
      <DateAxis />

      <SliderRow>
        <Track>
          <Thumb><i /><i /><i /></Thumb>
          <Thumb><i /><i /><i /></Thumb>
        </Track>
      </SliderRow>

      <Banner>
        <svg width="47" height="42" viewBox="0 0 47 42" fill={C.brand}>
          <path d="M1 14H4.500V29H1ZM9 13L42 4V1H46V40H42V37L27 33.500V36L24 38L17 36L15 31.500L9 30Z" />
        </svg>
        <Fade>
          <Fit w={170} size={39} c="#dc5a12">股息防御”</Fit>
          <Fit w={576} size={39} ml={23} c="#dc5a12">等场景的组合 近1年收益率达51%</Fit>
        </Fade>
        <Rule $ml={87} />
        <Cluster $ml={16}><Cross s={33} c={C.brand} sw={3} /></Cluster>
      </Banner>

      <Strip />
      <BottomBar>
        <IndexBox>
          <Caret w={22} h={8} up />
          <IndexLine $mt={14} $pl={66}><Fit w={145} size={42} c={C.fall}>2967.75</Fit></IndexLine>
          <IndexLine $mt={9} $pl={41}>
            <Fit w={69} size={35} c={C.grey}>创业</Fit>
            <Fit w={116} size={36} ml={47} c={C.fall}>-2.29%</Fit>
          </IndexLine>
        </IndexBox>
        <Action><TradeIcon /><Fit w={67} size={35} c={C.grey}>交易</Fit></Action>
        <Action><PostIcon /><Fit w={69} size={35} c={C.grey}>发帖</Fit></Action>
        <Action><FeatureIcon /><Fit w={70} size={35} c={C.grey}>功能</Fit></Action>
        <Action><EllipsisIcon /><Fit w={106} size={35} c={C.grey}>设自选</Fit></Action>
      </BottomBar>

      <SystemNav>
        <svg width="52" height="44" viewBox="0 0 52 44" stroke="#888" strokeWidth="5.600" strokeLinecap="round">
          <path d="M5.500 10H45.500M5.500 25H45.500M5.500 40H45.500" />
        </svg>
        <svg width="62" height="46" viewBox="0 0 62 46" fill="none" stroke="#888" strokeWidth="5.400" strokeLinecap="round" strokeLinejoin="round">
          <path d="M4.500 24L31 4.500L57.500 24M13 29V38Q13 42.500 17.500 42.500H45Q49.500 42.500 49.500 38V29" />
        </svg>
        <svg width="52" height="46" viewBox="0 0 52 46" fill="none" stroke="#888" strokeWidth="5.400" strokeLinecap="round" strokeLinejoin="round">
          <path d="M15 5L6 11H43Q47.500 11 47.500 15V38Q47.500 42 43 42H14" />
        </svg>
      </SystemNav>
    </Page>
  );
}
